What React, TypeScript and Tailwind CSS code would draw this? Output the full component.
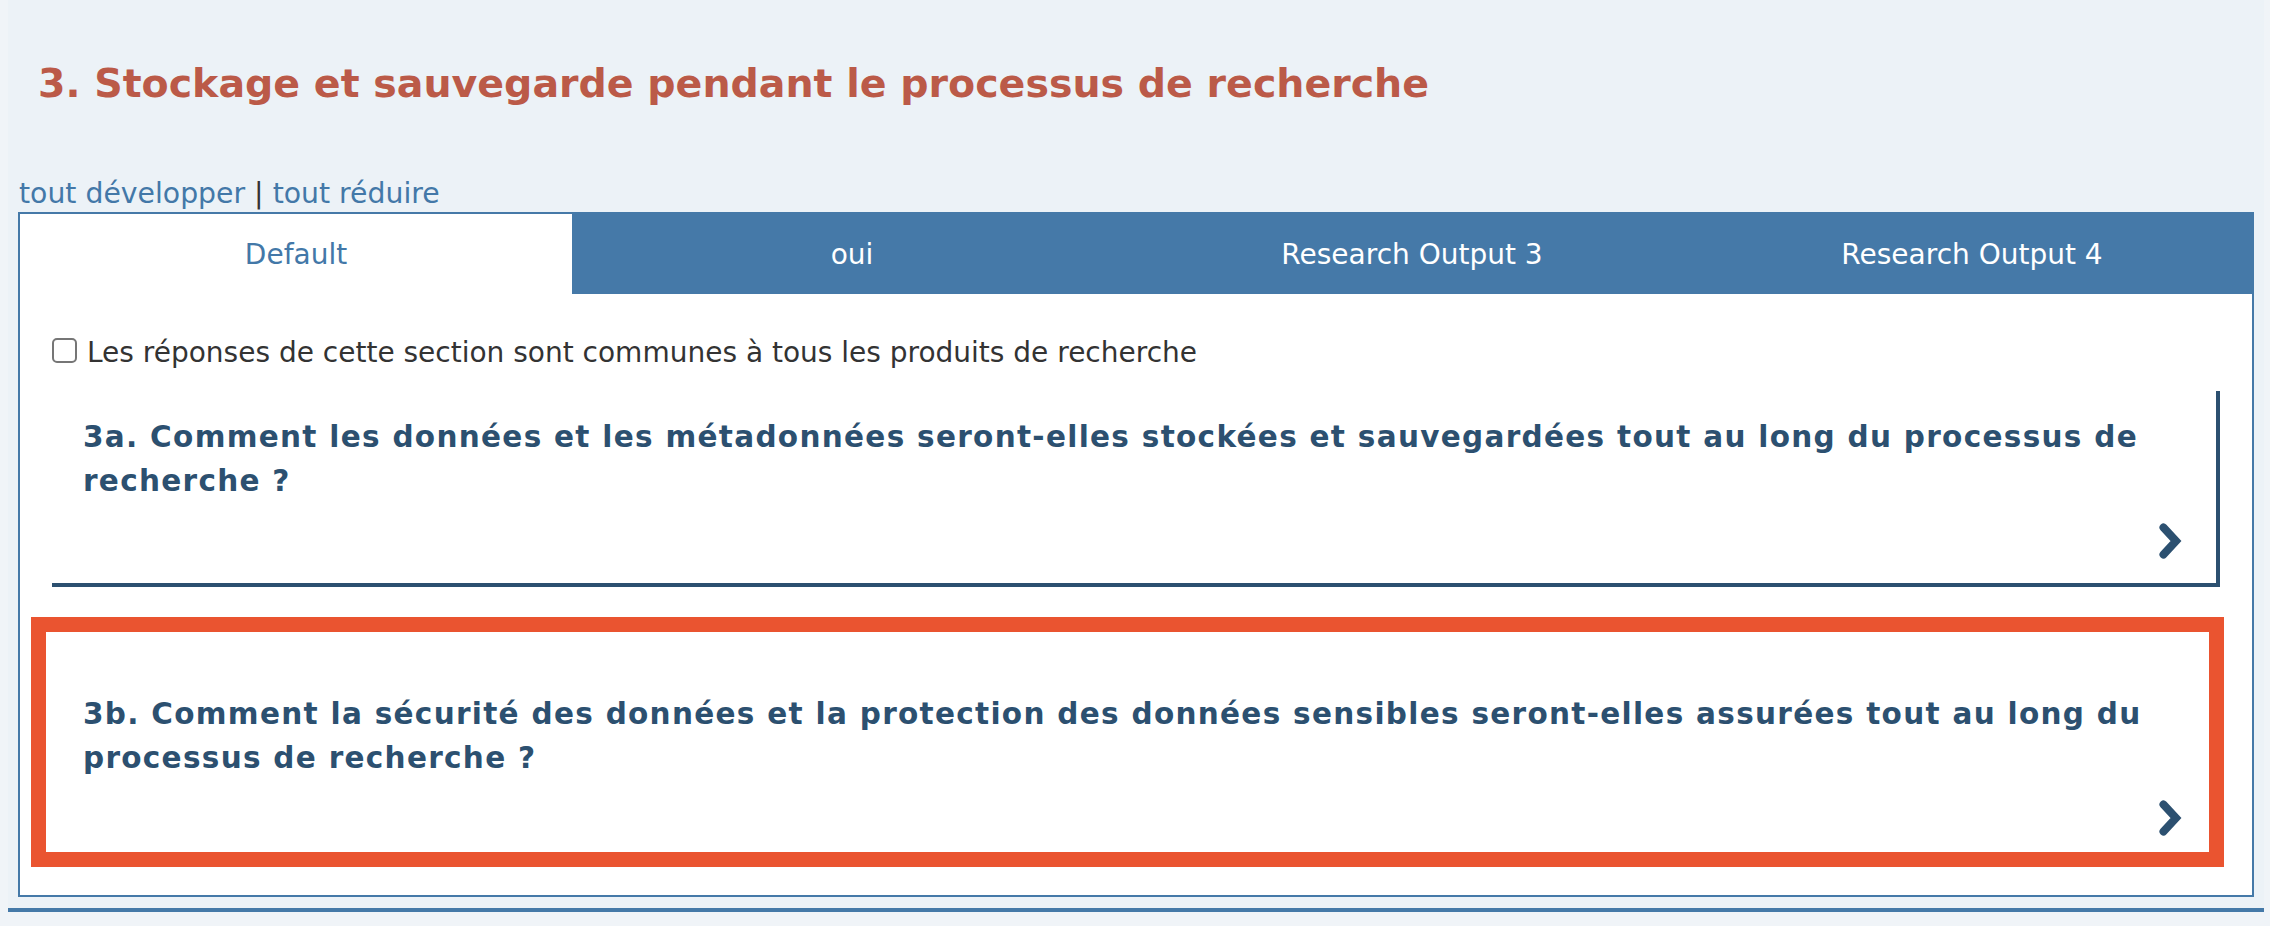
import React from "react";

function Chevron() {
  return (
    <svg width="24" height="36" viewBox="0 0 24 36" className="block">
      <polyline
        points="4.5,4.5 17,18 4.5,31.5"
        fill="none"
        stroke="#2c5070"
        strokeWidth="8"
        strokeLinecap="round"
        strokeLinejoin="miter"
      />
    </svg>
  );
}

function QuestionCard({ text, highlighted }: { text: string; highlighted?: boolean }) {
  return (
    <div className="relative bg-white border-r-4 border-b-4 border-[#2c5070] pl-[31px] pr-[33px] pt-[24px] pb-[24px]">
      <h3 className="text-[29.5px] leading-[44px] tracking-[1.3px] font-bold text-[#2c5070]">{text}</h3>
      <div className="mt-[20px] flex justify-end h-[36px]">
        <Chevron />
      </div>
      {highlighted && (
        <div className="pointer-events-none absolute left-[-21px] right-[-8px] top-[-51px] bottom-[-7px] border-[15px] border-[#ea5430]" />
      )}
    </div>
  );
}

export default function App() {
  const tabs = ["Default", "oui", "Research Output 3", "Research Output 4"];
  return (
    <div className="h-[926px] overflow-hidden bg-[#f0f4f8] font-['DejaVu_Sans',Verdana,sans-serif]">
      <div className="ml-[8px] mr-[6px] bg-[#ecf2f7] px-[10px] pb-[11px] border-b-4 border-[#4579a8]">
        <h2 className="pt-[59px] pl-[20px] text-[39.5px] leading-[48px] font-bold text-[#bb5a48]">
          3. Stockage et sauvegarde pendant le processus de recherche
        </h2>
        <div className="mt-[71px] pl-[1px] text-[28.3px] leading-[32px] text-[#333]">
          <span className="text-[#4378a8]">tout développer</span>
          <span> | </span>
          <span className="text-[#4378a8]">tout réduire</span>
        </div>
        <div className="mt-[2px] border-2 border-[#4579a8] bg-white">
          <div className="grid grid-cols-[552px_1fr_1fr_1fr] h-[80px]">
            {tabs.map((t, i) => (
              <div
                key={t}
                className={
                  i === 0
                    ? "flex items-center justify-center pt-[2px] bg-white text-[28px] text-[#4378a8]"
                    : "flex items-center justify-center pt-[2px] bg-[#4579a8] text-[28px] text-white"
                }
              >
                {t}
              </div>
            ))}
          </div>
          <div className="px-[32px] pt-[43px] pb-[31px]">
            <label className="flex items-start gap-[10px] text-[28px] leading-[32px] text-[#333]">
              <span className="mt-[1px] block w-[25px] h-[25px] rounded-[5px] border-2 border-[#767676] bg-white shrink-0" />
              <span>Les réponses de cette section sont communes à tous les produits de recherche</span>
            </label>
            <div className="mt-[22px]">
              <QuestionCard text="3a. Comment les données et les métadonnées seront-elles stockées et sauvegardées tout au long du processus de recherche ?" />
            </div>
            <div className="mt-[81px]">
              <QuestionCard
                highlighted
                text="3b. Comment la sécurité des données et la protection des données sensibles seront-elles assurées tout au long du processus de recherche ?"
              />
            </div>
          </div>
        </div>
      </div>
    </div>
  );
}
